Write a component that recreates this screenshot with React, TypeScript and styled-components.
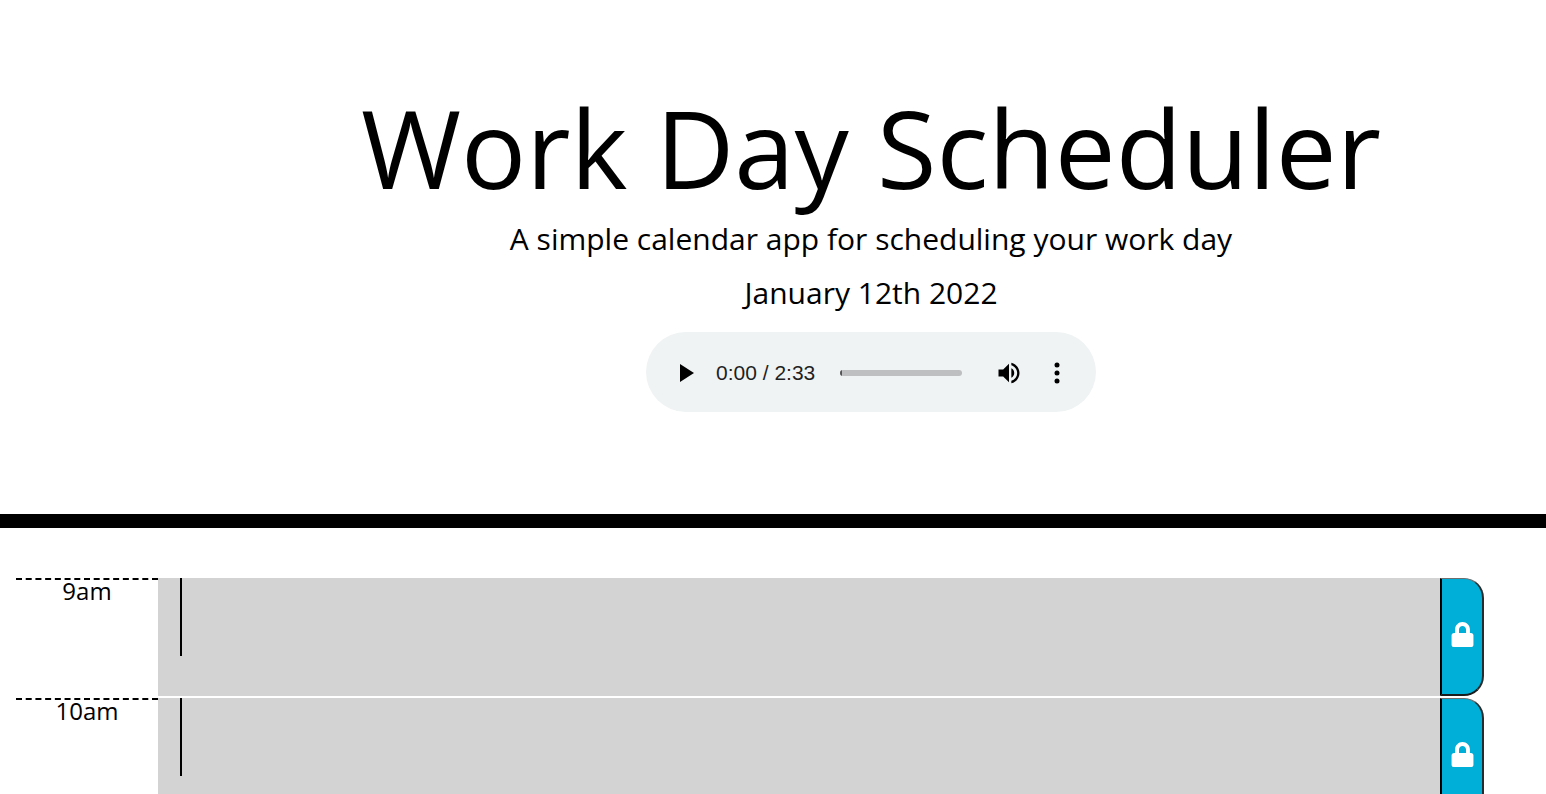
import React from "react";
import styled, { createGlobalStyle } from "styled-components";
import { FaLock } from "react-icons/fa";

const Global = createGlobalStyle`
  html, body { margin: 0; padding: 0; background: #fff; }
  body { font-family: "Open Sans", "Liberation Sans", sans-serif; color: #000; }
  #root { height: 100vh; overflow: hidden; }
`;

const Header = styled.header`
  box-sizing: border-box;
  height: 528px;
  padding: 77px 0 0 196px;
  border-bottom: 14px solid #000;
  display: flex;
  flex-direction: column;
  align-items: center;
`;

const Title = styled.h1`
  margin: 0 0 4px;
  font-size: 108.4px;
  font-weight: 400;
  line-height: 140px;
  white-space: nowrap;
`;

const Lead = styled.p`
  margin: 0;
  font-size: 30px;
  font-weight: 400;
  line-height: 36px;
  white-space: nowrap;
`;

const DateLine = styled.p`
  margin: 18px 0 0;
  font-size: 30px;
  font-weight: 400;
  line-height: 36px;
  white-space: nowrap;
`;

const Player = styled.div`
  box-sizing: border-box;
  margin-top: 21px;
  width: 450px;
  height: 80px;
  border-radius: 40px;
  background: #eff3f4;
  display: flex;
  align-items: flex-start;
  padding: 27px 0 0 0;
`;

const PlayIcon = styled.svg`
  width: 16px;
  height: 18px;
  margin: 5px 0 0 33px;
  flex: none;
`;

const Time = styled.span`
  margin-left: 21px;
  font-family: "Liberation Sans", Arial, sans-serif;
  font-size: 21px;
  line-height: 28px;
  color: #1f1f1f;
  white-space: nowrap;
  width: 100px;
  flex: none;
`;

const Track = styled.div`
  margin: 11px 0 0 24px;
  width: 122px;
  height: 6px;
  border-radius: 3px;
  background: #bdbfc1;
  flex: none;
  overflow: hidden;
`;

const TrackFill = styled.div`
  width: 2px;
  height: 100%;
  background: #555;
`;

const VolumeIcon = styled.svg`
  width: 28px;
  height: 28px;
  margin: 0 0 0 33px;
  flex: none;
`;

const MoreIcon = styled.svg`
  width: 6px;
  height: 22px;
  margin: 3px 0 0 31px;
  flex: none;
`;

const Rows = styled.main`
  padding: 50px 62px 0 16px;
  display: flex;
  flex-direction: column;
  gap: 2px;
`;

const Row = styled.section`
  display: flex;
  height: 118px;
`;

const Hour = styled.div`
  box-sizing: border-box;
  width: 142px;
  flex: none;
  border-top: 2px dashed #000;
  font-size: 24px;
  line-height: 22px;
  text-align: center;
`;

const Body = styled.div`
  flex: 1;
  background: #d3d3d3;
  padding-left: 22px;
`;

const Notes = styled.div`
  width: 2px;
  height: 78px;
  background: #000;
`;

const Save = styled.button`
  box-sizing: border-box;
  width: 44px;
  flex: none;
  padding: 0 0 4px 0;
  background: #00afd7;
  color: #fff;
  border-style: solid;
  border-width: 1.5px 2px 2px 2px;
  border-color: #6e6e6e #2b2b2b #1c1c1c #000;
  border-radius: 0 20px 20px 0;
  display: flex;
  align-items: center;
  justify-content: center;
  font-size: 25px;
`;

const hours = ["9am", "10am"];

export default function App() {
  return (
    <>
      <Global />
      <Header>
        <Title>Work Day Scheduler</Title>
        <Lead>A simple calendar app for scheduling your work day</Lead>
        <DateLine>January 12th 2022</DateLine>
        <Player>
          <PlayIcon viewBox="0 0 16 18"><path d="M1 0 L15 9 L1 18 Z" fill="#000" /></PlayIcon>
          <Time>0:00 / 2:33</Time>
          <Track><TrackFill /></Track>
          <VolumeIcon viewBox="0 0 24 24">
            <path d="M3 9v6h4l5 5V4L7 9H3z" fill="#000" />
            <path d="M14 3.2v2.1c2.9.9 5 3.5 5 6.7s-2.1 5.8-5 6.7v2.1c4-.9 7-4.5 7-8.8s-3-7.9-7-8.8zM16.5 12c0-1.8-1-3.3-2.5-4v8c1.5-.7 2.5-2.2 2.5-4z" fill="#000" />
          </VolumeIcon>
          <MoreIcon viewBox="0 0 6 22">
            <circle cx="3" cy="3" r="2.5" fill="#000" />
            <circle cx="3" cy="11" r="2.5" fill="#000" />
            <circle cx="3" cy="19" r="2.5" fill="#000" />
          </MoreIcon>
        </Player>
      </Header>
      <Rows>
        {hours.map((h) => (
          <Row key={h}>
            <Hour>{h}</Hour>
            <Body><Notes /></Body>
            <Save aria-label="Save"><FaLock /></Save>
          </Row>
        ))}
      </Rows>
    </>
  );
}
